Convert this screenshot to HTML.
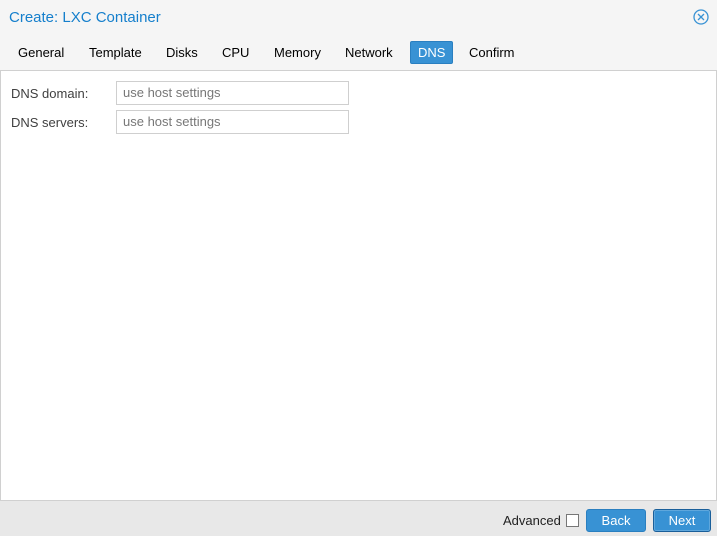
<!DOCTYPE html>
<html><head><style>
body{margin:0;width:717px;height:535px;position:relative;font-family:"Liberation Sans",Arial,sans-serif;font-size:13px;color:#000;overflow:hidden;background:#fff}
.hdr{position:absolute;left:0;top:0;width:717px;height:70px;background:#f5f5f5;border-bottom:1px solid #d0d0d0}
.title{position:absolute;left:9px;top:9px;font-size:15px;color:#157fcc}
.tab{position:absolute;top:42px;height:22px;line-height:22px;padding:0 8px;border-radius:2px}
.act{background:#3892d4;color:#fff;border:1px solid #2a7fc0;top:41px;padding:0 7px;height:21px;line-height:21px}
.main{position:absolute;left:0;top:71px;width:715px;height:429px;border-left:1px solid #d0d0d0;border-right:1px solid #d0d0d0}
.lbl{position:absolute;left:10px;color:#404040}
.inp{position:absolute;left:115px;height:22px;border:1px solid #cfcfcf;box-sizing:content-box;color:#777;line-height:22px;padding-left:6px;width:225px}
.ftr{position:absolute;left:0;top:500px;width:717px;height:35px;background:#e8e8e8;border-top:1px solid #d0d0d0}
.btn{position:absolute;top:8px;height:21px;line-height:21px;background:#3892d4;color:#fff;text-align:center;border:1px solid #2a7fc0;border-radius:3px}
</style></head><body>
<div class="hdr">
<div class="title">Create: LXC Container</div>
<svg style="position:absolute;left:693px;top:9px" width="16" height="16" viewBox="0 0 16 16"><circle cx="8" cy="8" r="7" fill="none" stroke="#3892d4" stroke-width="1.3"/><path d="M5 5L11 11M11 5L5 11" stroke="#3892d4" stroke-width="1.3"/></svg>
<div class="tab" style="left:10px">General</div>
<div class="tab" style="left:81px">Template</div>
<div class="tab" style="left:158px">Disks</div>
<div class="tab" style="left:214px">CPU</div>
<div class="tab" style="left:266px">Memory</div>
<div class="tab" style="left:337px">Network</div>
<div class="tab act" style="left:410px">DNS</div>
<div class="tab" style="left:461px">Confirm</div>
</div>
<div class="main">
<div class="lbl" style="top:15px">DNS domain:</div>
<div class="inp" style="top:10px">use host settings</div>
<div class="lbl" style="top:44px">DNS servers:</div>
<div class="inp" style="top:39px">use host settings</div>
</div>
<div class="ftr">
<div style="position:absolute;left:503px;top:12px;color:#222">Advanced</div>
<div style="position:absolute;left:566px;top:13px;width:11px;height:11px;border:1px solid #777;background:#fff"></div>
<div class="btn" style="left:586px;width:58px">Back</div>
<div class="btn" style="left:653px;width:56px;border-color:#1a5f9a;box-shadow:inset 0 0 0 1px #fff3">Next</div>
</div>
</body></html>
